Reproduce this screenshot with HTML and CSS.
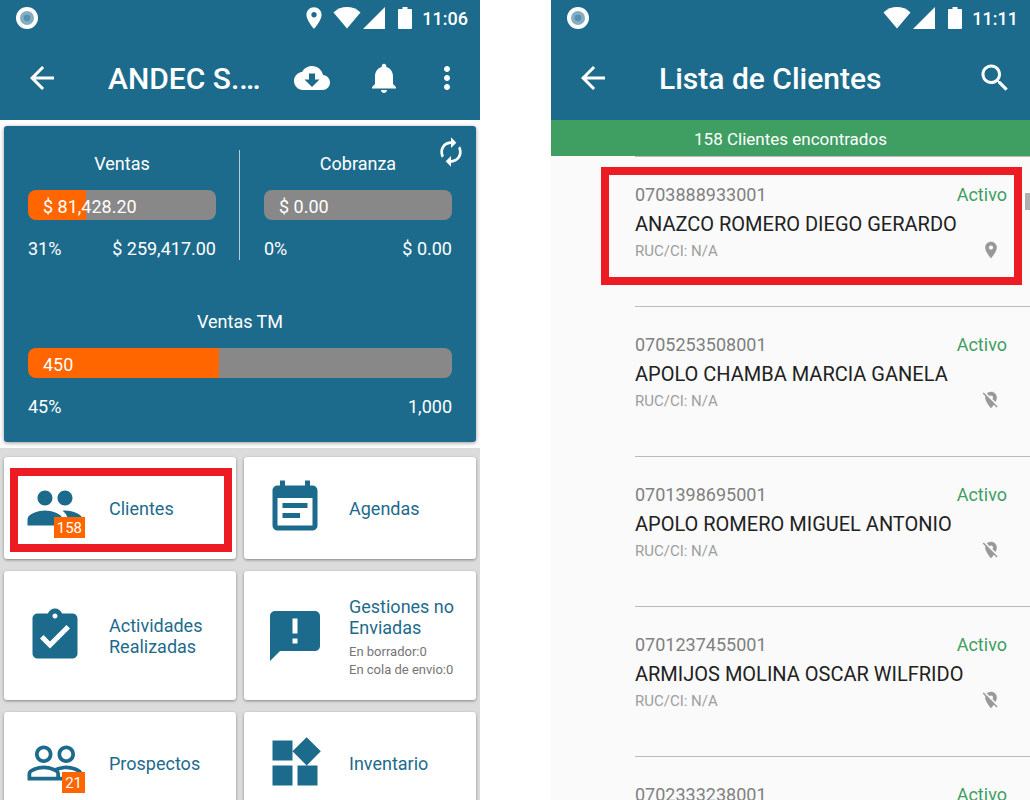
FILE: index.html
```html
<!DOCTYPE html>
<html lang="es">

<head>
    <meta charset="utf-8">
    <meta name="viewport" content="width=device-width, initial-scale=1.0">
    <title>Lista de Clientes</title>
    <link rel="stylesheet" href="styles.css">
</head>

<body>

    <!-- Iconos compartidos -->
    <svg class="sprite" aria-hidden="true">
        <symbol id="i-app" viewBox="0 0 22 22">
            <circle cx="11" cy="11" r="11" fill="#fff" />
            <circle cx="11" cy="11" r="7" fill="#83adc0" />
            <circle cx="11" cy="11" r="3.2" fill="#5590ac" />
        </symbol>
        <symbol id="i-place" viewBox="0 0 24 24">
            <path d="M12 2C8.13 2 5 5.13 5 9c0 5.25 7 13 7 13s7-7.75 7-13c0-3.87-3.13-7-7-7zm0 9.5c-1.38 0-2.5-1.12-2.5-2.5s1.12-2.5 2.5-2.5 2.5 1.12 2.5 2.5-1.12 2.5-2.5 2.5z" />
        </symbol>
        <symbol id="i-place-off" viewBox="0 0 24 24">
            <path d="M12 6.5c1.38 0 2.5 1.12 2.5 2.5 0 .74-.33 1.39-.83 1.85l3.63 3.63c.98-1.86 1.7-3.8 1.7-5.48 0-3.87-3.13-7-7-7-1.98 0-3.76.83-5.04 2.15l3.19 3.19c.46-.52 1.11-.84 1.85-.84zm4.37 9.6l-4.63-4.63-.11-.11L3.27 3 2 4.27l3.18 3.18C5.07 7.95 5 8.47 5 9c0 5.25 7 13 7 13s1.67-1.85 3.38-4.35L18.73 21 20 19.73l-3.63-3.63z" />
        </symbol>
        <symbol id="i-wifi" viewBox="0 0 28 22">
            <path d="M.5 5.5C8-1.7 20-1.7 27.5 5.5L14 21.5z" />
        </symbol>
        <symbol id="i-signal" viewBox="0 0 22 22">
            <path d="M22 0v22H0z" />
        </symbol>
        <symbol id="i-battery" viewBox="0 0 14 22">
            <path d="M4.5 0h5v2H13q1 0 1 1v18q0 1-1 1H1q-1 0-1-1V3q0-1 1-1h3.500z" />
        </symbol>
        <symbol id="i-back" viewBox="0 0 24 24">
            <path d="M20 11H7.83l5.59-5.59L12 4l-8 8 8 8 1.41-1.41L7.83 13H20v-2z" />
        </symbol>
    </svg>

    <main class="screens">

        <section class="phone">
            <header class="top">
                <div class="status">
                    <svg class="app"><use href="#i-app" /></svg>
                    <svg class="gps"><use href="#i-place" /></svg>
                    <svg class="wifi"><use href="#i-wifi" /></svg>
                    <svg class="signal"><use href="#i-signal" /></svg>
                    <svg class="battery"><use href="#i-battery" /></svg>
                    <time>11:06</time>
                </div>
                <div class="toolbar">
                    <button class="back" aria-label="Volver"><svg><use href="#i-back" /></svg></button>
                    <h1>ANDEC S.…</h1>
                    <button class="sync" aria-label="Descargar">
                        <svg viewBox="0 0 24 24"><path d="M19.35 10.04C18.67 6.59 15.64 4 12 4 9.11 4 6.6 5.64 5.35 8.04 2.34 8.36 0 10.91 0 14c0 3.31 2.69 6 6 6h13c2.76 0 5-2.24 5-5 0-2.64-2.05-4.78-4.65-4.96zM17 13l-5 5-5-5h3V9h4v4h3z" /></svg>
                    </button>
                    <button class="bell" aria-label="Notificaciones">
                        <svg viewBox="0 0 24 24"><path d="M12 22c1.1 0 2-.9 2-2h-4c0 1.100.89 2 2 2zm6-6v-5c0-3.070-1.640-5.640-4.500-6.320V4c0-.83-.67-1.500-1.500-1.500s-1.500.67-1.500 1.500v.68C7.630 5.360 6 7.920 6 11v5l-2 2v1h16v-1l-2-2z" /></svg>
                    </button>
                    <button class="more" aria-label="Más opciones">
                        <svg viewBox="0 0 24 24"><path d="M12 8c1.1 0 2-.9 2-2s-.9-2-2-2-2 .9-2 2 .9 2 2 2zm0 2c-1.1 0-2 .9-2 2s.9 2 2 2 2-.9 2-2-.9-2-2-2zm0 6c-1.1 0-2 .9-2 2s.9 2 2 2 2-.9 2-2-.9-2-2-2z" /></svg>
                    </button>
                </div>
            </header>

            <div class="summary">
                <button class="refresh" aria-label="Actualizar">
                    <svg viewBox="0 0 24 24"><path d="M12 6v3l4-4-4-4v3c-4.420 0-8 3.580-8 8 0 1.570.46 3.030 1.240 4.260L6.700 14.800c-.45-.83-.7-1.790-.7-2.800 0-3.310 2.690-6 6-6zm6.760 1.740L17.300 9.200c.44.84.7 1.790.7 2.800 0 3.310-2.690 6-6 6v-3l-4 4 4 4v-3c4.420 0 8-3.580 8-8 0-1.570-.46-3.030-1.240-4.260z" /></svg>
                </button>
                <div class="pair">
                    <div class="meter">
                        <h2>Ventas</h2>
                        <div class="bar" style="--value: 31%">$ 81,428.20</div>
                        <div class="values"><span>31%</span><span>$ 259,417.00</span></div>
                    </div>
                    <div class="meter">
                        <h2>Cobranza</h2>
                        <div class="bar" style="--value: 0%">$ 0.00</div>
                        <div class="values"><span>0%</span><span>$ 0.00</span></div>
                    </div>
                </div>
                <div class="meter">
                    <h2>Ventas TM</h2>
                    <div class="bar" style="--value: 45%">450</div>
                    <div class="values"><span>45%</span><span>1,000</span></div>
                </div>
            </div>

            <nav class="menu">
                <a class="tile marked" href="#clientes">
                    <span class="icon">
                        <svg viewBox="0 0 24 24"><path d="M16 11c1.660 0 2.990-1.340 2.990-3S17.660 5 16 5c-1.660 0-3 1.340-3 3s1.340 3 3 3zm-8 0c1.660 0 2.990-1.340 2.990-3S9.660 5 8 5C6.340 5 5 6.340 5 8s1.340 3 3 3zm0 2c-2.330 0-7 1.170-7 3.500V19h14v-2.500c0-2.330-4.670-3.500-7-3.500zm8 0c-.29 0-.62.02-.97.05 1.160.84 1.970 1.970 1.970 3.450V19h6v-2.500c0-2.330-4.670-3.500-7-3.500z" /></svg>
                        <span class="badge">158</span>
                    </span>
                    <span class="label">Clientes</span>
                </a>
                <a class="tile" href="#agendas">
                    <span class="icon">
                        <svg viewBox="0 0 24 24"><path d="M17 10H7v2h10v-2zm2-7h-1V1h-2v2H8V1H6v2H5c-1.110 0-2 .9-2 2v14c0 1.100.89 2 2 2h14c1.100 0 2-.9 2-2V5c0-1.100-.9-2-2-2zm0 16H5V8h14v11zm-5-5H7v2h7v-2z" /></svg>
                    </span>
                    <span class="label">Agendas</span>
                </a>
                <a class="tile" href="#actividades">
                    <span class="icon">
                        <svg viewBox="0 0 24 24"><path d="M19 3h-4.180C14.400 1.840 13.300 1 12 1c-1.300 0-2.400.84-2.820 2H5c-1.100 0-2 .9-2 2v14c0 1.100.9 2 2 2h14c1.100 0 2-.9 2-2V5c0-1.100-.9-2-2-2zm-7 0c.55 0 1 .45 1 1s-.45 1-1 1-1-.45-1-1 .45-1 1-1zm-2 14l-4-4 1.410-1.410L10 14.170l6.590-6.590L18 9l-8 8z" /></svg>
                    </span>
                    <span class="label">Actividades Realizadas</span>
                </a>
                <a class="tile" href="#gestiones">
                    <span class="icon">
                        <svg viewBox="0 0 24 24"><path d="M20 2H4c-1.100 0-1.990.9-1.990 2L2 22l4-4h14c1.100 0 2-.9 2-2V4c0-1.100-.9-2-2-2zm-7 13h-2v-2h2v2zm0-4h-2V5h2v6z" /></svg>
                    </span>
                    <span class="label detailed">Gestiones no Enviadas
                        <small>En borrador:0<br>En cola de envio:0</small>
                    </span>
                </a>
                <a class="tile" href="#prospectos">
                    <span class="icon">
                        <svg viewBox="0 0 24 24"><path d="M16.500 13c-1.200 0-3.070.34-4.500 1-1.430-.67-3.300-1-4.500-1C5.330 13 1 14.080 1 16.250V19h22v-2.750c0-2.170-4.330-3.250-6.500-3.250zm-4 4.500h-10v-1.250c0-.54 2.560-1.750 5-1.750s5 1.210 5 1.750v1.250zm9 0H14v-1.250c0-.46-.2-.86-.52-1.220.88-.3 1.960-.53 3.020-.53 2.440 0 5 1.210 5 1.750v1.250zM7.500 12c1.930 0 3.500-1.570 3.500-3.500S9.430 5 7.500 5 4 6.570 4 8.500 5.570 12 7.500 12zm0-5.500c1.100 0 2 .9 2 2s-.9 2-2 2-2-.9-2-2 .9-2 2-2zm9 5.500c1.930 0 3.500-1.570 3.500-3.500S18.430 5 16.500 5 13 6.570 13 8.500s1.570 3.500 3.500 3.500zm0-5.500c1.100 0 2 .9 2 2s-.9 2-2 2-2-.9-2-2 .9-2 2-2z" /></svg>
                        <span class="badge">21</span>
                    </span>
                    <span class="label">Prospectos</span>
                </a>
                <a class="tile" href="#inventario">
                    <span class="icon">
                        <svg viewBox="0 0 24 24"><path d="M13 13v8h8v-8h-8zM3 21h8v-8H3v8zM3 3v8h8V3H3zm13.660-1.310L11 7.340 16.660 13l5.660-5.660-5.660-5.650z" /></svg>
                    </span>
                    <span class="label">Inventario</span>
                </a>
            </nav>
        </section>

        <section class="phone">
            <header class="top">
                <div class="status">
                    <svg class="app"><use href="#i-app" /></svg>
                    <svg class="wifi"><use href="#i-wifi" /></svg>
                    <svg class="signal"><use href="#i-signal" /></svg>
                    <svg class="battery"><use href="#i-battery" /></svg>
                    <time>11:11</time>
                </div>
                <div class="toolbar">
                    <button class="back" aria-label="Volver"><svg><use href="#i-back" /></svg></button>
                    <h1>Lista de Clientes</h1>
                    <button class="search" aria-label="Buscar">
                        <svg viewBox="0 0 24 24"><path d="M15.500 14h-.79l-.28-.27C15.410 12.590 16 11.110 16 9.500 16 5.910 13.090 3 9.500 3S3 5.910 3 9.500 5.910 16 9.500 16c1.610 0 3.090-.59 4.230-1.570l.27.28v.79l5 4.990L20.490 19l-4.990-5zm-6 0C7.010 14 5 11.990 5 9.500S7.010 5 9.500 5 14 7.010 14 9.500 11.990 14 9.500 14z" /></svg>
                    </button>
                </div>
            </header>

            <p class="found">158 Clientes encontrados</p>

            <div class="list">
                <span class="thumb"></span>
                <article class="client marked">
                    <div class="row"><span class="code">0703888933001</span><span class="state">Activo</span></div>
                    <h3>ANAZCO ROMERO DIEGO GERARDO</h3>
                    <div class="row"><span class="ruc">RUC/CI: N/A</span><svg class="pin"><use href="#i-place" /></svg></div>
                </article>
                <article class="client">
                    <div class="row"><span class="code">0705253508001</span><span class="state">Activo</span></div>
                    <h3>APOLO CHAMBA MARCIA GANELA</h3>
                    <div class="row"><span class="ruc">RUC/CI: N/A</span><svg class="pin"><use href="#i-place-off" /></svg></div>
                </article>
                <article class="client">
                    <div class="row"><span class="code">0701398695001</span><span class="state">Activo</span></div>
                    <h3>APOLO ROMERO MIGUEL ANTONIO</h3>
                    <div class="row"><span class="ruc">RUC/CI: N/A</span><svg class="pin"><use href="#i-place-off" /></svg></div>
                </article>
                <article class="client">
                    <div class="row"><span class="code">0701237455001</span><span class="state">Activo</span></div>
                    <h3>ARMIJOS MOLINA OSCAR WILFRIDO</h3>
                    <div class="row"><span class="ruc">RUC/CI: N/A</span><svg class="pin"><use href="#i-place-off" /></svg></div>
                </article>
                <article class="client">
                    <div class="row"><span class="code">0702333238001</span><span class="state">Activo</span></div>
                </article>
            </div>
        </section>

    </main>

</body>

</html>
```
FILE: styles.css
```css
* {
    box-sizing: border-box;
}

body {
    margin: 0;
    font-family: Roboto, sans-serif;
    font-size: 18px;
    background-color: #fff;
}

h1, h2, h3, p {
    margin: 0;
    font-weight: 400;
}

svg {
    display: block;
    fill: currentColor;
}

button {
    padding: 0;
    border: none;
    background: none;
    color: inherit;
    cursor: pointer;
}

.sprite {
    display: none;
}

.screens {
    display: grid;
    grid-template-columns: 480fr 479fr;
    column-gap: 71px;
    height: 100vh;
    overflow: hidden;
}

.phone {
    min-width: 0;
}

/* Barra de estado y barra de título */

.top {
    background-color: #1d6b8c;
    color: #fff;
}

.status {
    display: flex;
    align-items: center;
    height: 36px;
    padding: 0 12px 0 16px;
}

.status time {
    font-weight: 500;
    line-height: 36px;
    padding-top: 2px;
}

.app {
    width: 22px;
    height: 22px;
    margin-right: auto;
}

.gps {
    width: 26px;
    height: 26px;
    margin-right: 6px;
}

.wifi {
    width: 28px;
    height: 22px;
    margin-right: 2px;
}

.signal {
    width: 22px;
    height: 22px;
    margin-right: 13px;
}

.battery {
    width: 14px;
    height: 22px;
    margin-right: 10px;
}

.toolbar {
    display: flex;
    align-items: center;
    height: 84px;
    padding: 0 15px 0 24px;
}

.toolbar svg {
    width: 36px;
    height: 36px;
}

.toolbar h1 {
    flex: 1;
    margin-left: 48px;
    font-size: 30px;
    font-weight: 500;
    white-space: nowrap;
}

.sync {
    margin-right: 36px;
}

.bell {
    margin-right: 27px;
}

.search {
    margin-right: 2px;
}

/* Resumen de ventas */

.summary {
    position: relative;
    margin: 6px 4px;
    padding: 24px;
    border-radius: 3px;
    background-color: #1d6b8c;
    color: #fff;
    box-shadow: 0 1px 4px rgba(0, 0, 0, 0.4);
}

.refresh {
    position: absolute;
    top: 10px;
    right: 9px;
}

.refresh svg {
    width: 32px;
    height: 32px;
}

.pair {
    display: grid;
    grid-template-columns: 1fr 1fr;
    margin-bottom: 48px;
}

.pair .meter:first-child {
    padding-right: 23px;
    border-right: 1px solid #b4ced9;
}

.pair .meter:last-child {
    padding-left: 24px;
}

.meter h2 {
    font-size: 18px;
    line-height: 28px;
    text-align: center;
}

.bar {
    height: 30px;
    margin: 12px 0 18px;
    padding: 2px 15px 0;
    border-radius: 8px;
    line-height: 30px;
    background: linear-gradient(#f60, #f60) 0 0 / var(--value) 100% no-repeat #888;
}

.values {
    display: flex;
    justify-content: space-between;
    line-height: 22px;
}

/* Menú */

.menu {
    display: grid;
    grid-template-columns: 1fr 1fr;
    gap: 12px 8px;
    padding: 9px 4px;
    background-color: #dcdcdc;
}

.tile {
    position: relative;
    display: flex;
    align-items: center;
    gap: 24px;
    padding: 21px;
    border-radius: 3px;
    background-color: #fff;
    color: #1d6b8c;
    text-decoration: none;
    box-shadow: 0 1px 3px rgba(0, 0, 0, 0.4);
}

.icon {
    position: relative;
    flex: none;
}

.icon svg {
    width: 60px;
    height: 60px;
}

.badge {
    position: absolute;
    right: 0;
    bottom: 0;
    padding: 1px 3px 0;
    background-color: #f60;
    color: #fff;
    font-size: 15px;
    line-height: 20px;
}

.label {
    line-height: 21px;
}

.detailed {
    padding-top: 4px;
}

.label small {
    display: block;
    margin-top: 5px;
    color: #757575;
    font-size: 13px;
    line-height: 18px;
    white-space: nowrap;
}

/* Lista de clientes */

.found {
    padding-top: 2px;
    background-color: #3f9e62;
    color: #fff;
    font-size: 17px;
    line-height: 34px;
    text-align: center;
}

.list {
    position: relative;
    padding-left: 84px;
    background-color: #fafafa;
}

.client {
    position: relative;
    height: 150px;
    padding: 26px 23px 0 0;
    border-top: 1px solid #bbb;
}

.row {
    display: flex;
    justify-content: space-between;
    align-items: center;
    line-height: 24px;
}

.code {
    color: #808080;
}

.state {
    color: #3f9e62;
}

.client h3 {
    padding-top: 2px;
    color: #212121;
    font-size: 20px;
    line-height: 30px;
    white-space: nowrap;
}

.ruc {
    color: #9e9e9e;
    font-size: 15px;
}

.pin {
    width: 20px;
    height: 20px;
    margin: 0 6px 2px 0;
    color: #999;
}

.thumb {
    position: absolute;
    top: 37px;
    right: 0;
    width: 5px;
    height: 17px;
    background-color: #b0b0b0;
}

/* Recuadros rojos */

.marked::after {
    content: "";
    position: absolute;
    border: 8px solid #ed1c24;
    pointer-events: none;
}

.tile.marked::after {
    inset: 11px 4px 7px 6px;
}

.client.marked::after {
    inset: 10px 8px 21px -34px;
}
```
